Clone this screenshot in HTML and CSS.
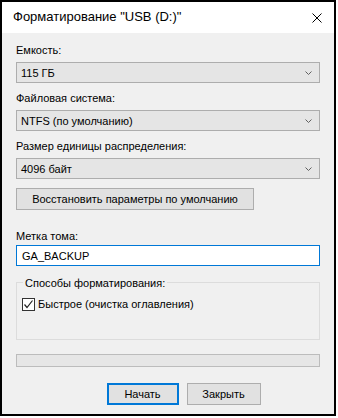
FILE: index.html
```html
<!DOCTYPE html>
<html lang="ru">
<head>
    <meta charset="UTF-8">
    <title>Форматирование "USB (D:)"</title>
    <link rel="stylesheet" href="styles.css">
</head>
<body>
    <div class="window">
        <div class="titlebar">
            <span class="title">Форматирование "USB (D:)"</span>
            <svg class="close" width="10" height="10" viewBox="0 0 10 10">
                <path d="M0.5 0.5 L9.5 9.5 M9.5 0.5 L0.5 9.5" stroke="#000" stroke-width="1" fill="none"/>
            </svg>
        </div>

        <div class="content">
            <div class="field">
                <label>Емкость:</label>
                <div class="select"><span>115 ГБ</span><svg class="chev" width="7" height="4" viewBox="0 0 7 4"><path d="M0.5 0.5 L3.5 3.5 L6.5 0.5" stroke="#606060" fill="none"/></svg></div>
            </div>
            <div class="field">
                <label>Файловая система:</label>
                <div class="select"><span>NTFS (по умолчанию)</span><svg class="chev" width="7" height="4" viewBox="0 0 7 4"><path d="M0.5 0.5 L3.5 3.5 L6.5 0.5" stroke="#606060" fill="none"/></svg></div>
            </div>
            <div class="field">
                <label>Размер единицы распределения:</label>
                <div class="select"><span>4096 байт</span><svg class="chev" width="7" height="4" viewBox="0 0 7 4"><path d="M0.5 0.5 L3.5 3.5 L6.5 0.5" stroke="#606060" fill="none"/></svg></div>
            </div>

            <button class="btn reset">Восстановить параметры по умолчанию</button>

            <div class="field label-field">
                <label>Метка тома:</label>
                <div class="textbox">GA_BACKUP</div>
            </div>

            <div class="group">
                <span class="group-title">Способы форматирования:</span>
                <div class="check-row">
                    <span class="checkbox">
                        <svg width="11" height="11" viewBox="0 0 11 11"><path d="M1.5 5.5 L4 8.5 L9.5 1.5" stroke="#222" stroke-width="1.2" fill="none"/></svg>
                    </span>
                    <span>Быстрое (очистка оглавления)</span>
                </div>
            </div>

            <div class="progress"></div>

            <div class="actions">
                <button class="btn primary">Начать</button>
                <button class="btn close-btn">Закрыть</button>
            </div>
        </div>
    </div>
</body>
</html>
```

FILE: styles.css
```css
body, html {
    margin: 0;
    padding: 0;
    background: #FFFFFF;
    font-family: "Liberation Sans", Arial, sans-serif;
    font-size: 11px;
    color: #000;
}

.window {
    width: 336px;
    height: 416px;
    box-sizing: border-box;
    border: 2px solid #000;
    background: #F0F0F0;
    display: flex;
    flex-direction: column;
}

.titlebar {
    height: 31px;
    background: #FFFFFF;
    display: flex;
    align-items: center;
    justify-content: space-between;
    padding: 0 11px 2px 11px;
    box-sizing: border-box;
}

.title {
    font-size: 13px;
}

.close {
    margin-right: 1px;
    margin-top: 3px;
}

.content {
    padding: 9px 14px 0 14px;
    display: flex;
    flex-direction: column;
}

.field {
    display: flex;
    flex-direction: column;
    margin-bottom: 7px;
}

.field label {
    line-height: 16px;
    margin-bottom: 4px;
    white-space: nowrap;
}

.select {
    height: 21px;
    box-sizing: border-box;
    border: 1px solid #ADADAD;
    background: #E5E5E5;
    display: flex;
    align-items: center;
    justify-content: space-between;
    padding: 0 7px 0 4px;
}

.btn {
    font-family: inherit;
    font-size: 11px;
    color: #000;
    background: #E1E1E1;
    border: 1px solid #ADADAD;
    height: 22px;
    padding: 0;
    margin: 0;
    white-space: nowrap;
}

.reset {
    width: 238px;
    margin-top: 2px;
}

.label-field {
    margin-top: 18px;
}

.label-field label {
    margin-bottom: 1px;
}

.textbox {
    height: 21px;
    box-sizing: border-box;
    border: 1px solid #0078D7;
    background: #FFFFFF;
    padding: 0 5px;
    display: flex;
    align-items: center;
}

.group {
    margin-top: 9px;
    height: 58px;
    box-sizing: border-box;
    border: 1px solid #DCDCDC;
    padding: 0 5px;
    display: flex;
    flex-direction: column;
    align-items: flex-start;
}

.group-title {
    margin-top: -6px;
    line-height: 13px;
    padding: 0 2px;
    margin-left: 1px;
    background: #F0F0F0;
}

.check-row {
    display: flex;
    align-items: center;
    gap: 3px;
    margin-top: 8px;
    line-height: 13px;
}

.checkbox {
    width: 13px;
    height: 13px;
    box-sizing: border-box;
    border: 1px solid #333;
    background: #FFFFFF;
    display: flex;
    align-items: center;
    justify-content: center;
}

.progress {
    margin-top: 14px;
    height: 13px;
    box-sizing: border-box;
    border: 1px solid #BCBCBC;
    background: #E6E6E6;
}

.actions {
    display: flex;
    justify-content: center;
    gap: 8px;
    margin-top: 16px;
    padding-left: 31px;
}

.primary {
    width: 72px;
    border: 2px solid #0078D7;
}

.close-btn {
    width: 74px;
}
```
